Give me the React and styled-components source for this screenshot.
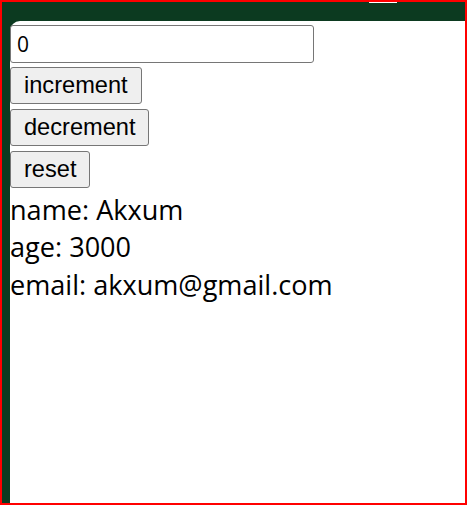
import React, { useState } from 'react';
import styled, { createGlobalStyle } from 'styled-components';

const GlobalStyle = createGlobalStyle`
  html, body {
    margin: 0;
    padding: 0;
    height: 100%;
  }
  #root {
    height: 100%;
  }
`;

const Frame = styled.div`
  box-sizing: border-box;
  height: 100%;
  border: 2px solid #ff0000;
  background: #0c3a20;
  padding: 19px 0 0 8px;
  display: flex;
  flex-direction: column;
  position: relative;
`;

const TopMark = styled.div`
  position: absolute;
  top: 0;
  left: 367px;
  width: 28px;
  height: 1px;
  background: #ffffff;
`;

const Panel = styled.div`
  flex: 1;
  background: #ffffff;
  border-top-left-radius: 10px;
  padding-top: 4px;
  display: flex;
  flex-direction: column;
  align-items: flex-start;
`;

const CountInput = styled.input`
  box-sizing: border-box;
  width: 304px;
  height: 38px;
  margin: 0 0 4px 0;
  padding: 1px 6px;
  border: 1px solid #767676;
  border-radius: 3px;
  font-family: 'Open Sans', 'Liberation Sans', sans-serif;
  font-size: 21px;
  color: #000;
`;

const ActionButton = styled.button`
  box-sizing: border-box;
  height: 37px;
  margin: 0 0 5px 0;
  padding: 1px 13px;
  border: 1px solid #767676;
  border-radius: 3px;
  background: #efefef;
  font-family: 'Liberation Sans', Arial, sans-serif;
  font-size: 23.6px;
  color: #000;
`;

const InfoList = styled.div`
  display: flex;
  flex-direction: column;
  margin-top: -2.5px;
`;

const Info = styled.div`
  font-family: 'Open Sans', 'Liberation Sans', sans-serif;
  font-size: 27.1px;
  line-height: 37.5px;
  color: #000;
`;

export default function App() {
  const [count, setCount] = useState(0);
  const user = { name: 'Akxum', age: 3000, email: 'akxum@gmail.com' };

  return (
    <>
      <GlobalStyle />
      <Frame>
        <TopMark />
        <Panel>
          <CountInput value={count} onChange={e => setCount(Number(e.target.value) || 0)} />
          <ActionButton onClick={() => setCount(c => c + 1)}>increment</ActionButton>
          <ActionButton onClick={() => setCount(c => c - 1)}>decrement</ActionButton>
          <ActionButton onClick={() => setCount(0)}>reset</ActionButton>
          <InfoList>
            <Info>name: {user.name}</Info>
            <Info>age: {user.age}</Info>
            <Info>email: {user.email}</Info>
          </InfoList>
        </Panel>
      </Frame>
    </>
  );
}
